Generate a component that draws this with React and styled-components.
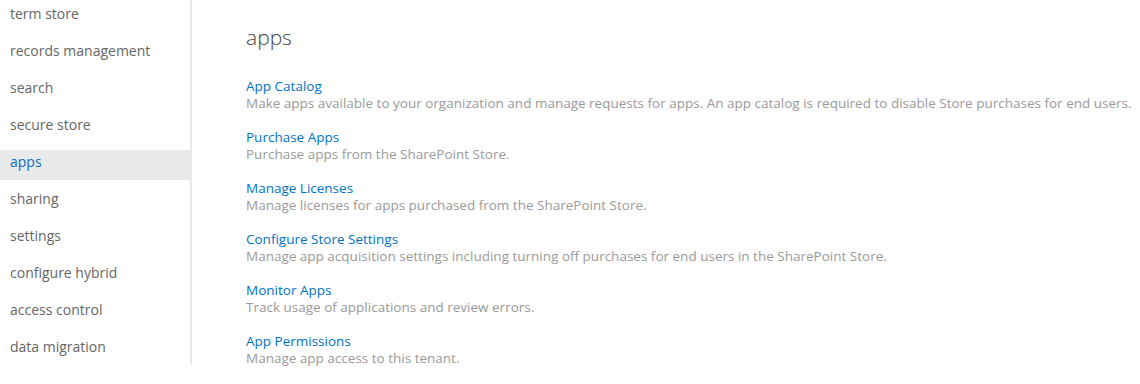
import React from "react";
import styled, { createGlobalStyle } from "styled-components";

const Global = createGlobalStyle`
  html, body { margin: 0; padding: 0; background: #fff; }
  body { font-family: "Open Sans", "Noto Sans", sans-serif; }
`;

const Page = styled.div`
  display: flex;
  align-items: flex-start;
  width: 1140px;
  height: 384px;
  overflow: hidden;
`;

const Sidebar = styled.nav`
  width: 190px;
  height: 363px;
  padding-top: 2px;
  border-right: 2px solid #eaeaea;
  display: flex;
  flex-direction: column;
  gap: 7px;
  flex-shrink: 0;
`;

const NavItem = styled.div`
  height: 30px;
  display: flex;
  align-items: center;
  padding-left: 10px;
  padding-bottom: 8px;
  box-sizing: border-box;
  font-size: 14px;
  color: ${(p) => (p.$active ? "#0f6cbd" : "#666")};
  background: ${(p) => (p.$active ? "#e9eaec" : "transparent")};
`;

const Main = styled.main`
  padding: 23px 0 0 54px;
  flex: 1;
`;

const Title = styled.h1`
  margin: 0 0 27px;
  font-size: 21px;
  font-weight: 300;
  color: #444;
  line-height: 28px;
`;

const List = styled.div`
  display: flex;
  flex-direction: column;
  gap: 17px;
`;

const Entry = styled.div`
  display: flex;
  flex-direction: column;
`;

const EntryLink = styled.a`
  font-size: 13.5px;
  line-height: 17px;
  color: #0072c6;
  text-decoration: none;
`;

const EntryDesc = styled.div`
  font-size: 13.5px;
  line-height: 17px;
  color: #9a9a9a;
  white-space: nowrap;
`;

const nav = [
  "term store",
  "records management",
  "search",
  "secure store",
  "apps",
  "sharing",
  "settings",
  "configure hybrid",
  "access control",
  "data migration",
];

const entries = [
  ["App Catalog", "Make apps available to your organization and manage requests for apps. An app catalog is required to disable Store purchases for end users."],
  ["Purchase Apps", "Purchase apps from the SharePoint Store."],
  ["Manage Licenses", "Manage licenses for apps purchased from the SharePoint Store."],
  ["Configure Store Settings", "Manage app acquisition settings including turning off purchases for end users in the SharePoint Store."],
  ["Monitor Apps", "Track usage of applications and review errors."],
  ["App Permissions", "Manage app access to this tenant."],
];

export default function App() {
  return (
    <>
      <Global />
      <Page>
        <Sidebar>
          {nav.map((n) => (
            <NavItem key={n} $active={n === "apps"}>{n}</NavItem>
          ))}
        </Sidebar>
        <Main>
          <Title>apps</Title>
          <List>
            {entries.map(([t, d]) => (
              <Entry key={t}>
                <EntryLink href="#">{t}</EntryLink>
                <EntryDesc>{d}</EntryDesc>
              </Entry>
            ))}
          </List>
        </Main>
      </Page>
    </>
  );
}
